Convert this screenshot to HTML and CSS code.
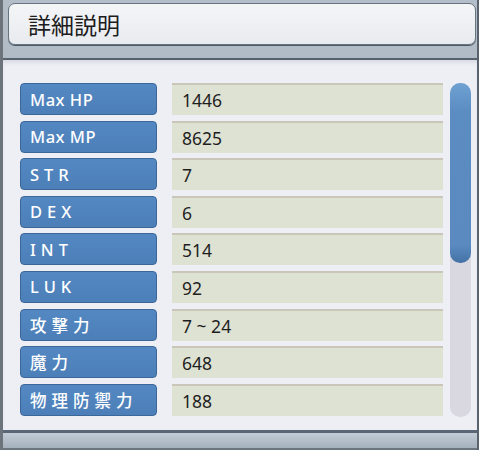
FILE: index.html
```html
<!DOCTYPE html>
<html lang="ja">
<head>
    <meta charset="UTF-8">
    <title>詳細説明</title>
    <link rel="stylesheet" href="styles.css">
</head>
<body>
    <div class="window">
        <div class="title">詳細説明</div>
        <div class="band"></div>
        <div class="panel">
            <div class="stats">
                <div class="label">Max HP</div><div class="value">1446</div>
                <div class="label">Max MP</div><div class="value">8625</div>
                <div class="label wide">STR</div><div class="value">7</div>
                <div class="label wide">DEX</div><div class="value">6</div>
                <div class="label wide">INT</div><div class="value">514</div>
                <div class="label wide">LUK</div><div class="value">92</div>
                <div class="label wide">攻撃力</div><div class="value">7 ~ 24</div>
                <div class="label wide">魔力</div><div class="value">648</div>
                <div class="label wide">物理防禦力</div><div class="value">188</div>
            </div>
            <div class="scroll">
                <div class="thumb"></div>
            </div>
        </div>
        <div class="footer"></div>
    </div>
</body>
</html>
```

FILE: styles.css
```css
body {
    margin: 0;
    background: #fff;
    font-family: "Noto Sans", "Noto Sans CJK JP", sans-serif;
}
.window {
    width: 474px;
    height: 450px;
    display: flex;
    flex-direction: column;
    background: linear-gradient(#b4bec8, #9ca8b4);
    border-left: 3px solid #6c737a;
    border-right: 2px solid #59636e;
}
.title {
    height: 40px;
    margin: 3px 1px 0 5px;
    padding-left: 19px;
    display: flex;
    align-items: center;
    font-size: 23px;
    color: #1c1c1c;
    background: linear-gradient(#f4f5f7, #e8ebef);
    border: 1px solid #66747f;
    border-radius: 7px;
    box-shadow: 0 1px 0 #4f5c68;
}
.band {
    height: 13px;
    border-bottom: 2px solid #56626e;
}
.panel {
    height: 347px;
    padding: 23px 0 0 17px;
    display: flex;
    background: #eeeef5;
    box-shadow: inset 0 4px 4px -2px #d4d6de;
}
.stats {
    display: grid;
    grid-template-columns: 137px 271px;
    grid-auto-rows: 32px;
    column-gap: 15px;
    row-gap: 5.6px;
}
.label {
    display: flex;
    align-items: center;
    padding-left: 9px;
    color: #fff;
    font-size: 16.5px;
    font-weight: 500;
    letter-spacing: 0.5px;
    background: linear-gradient(#5488c2, #4c7fb8);
    border: 1px solid #3b6899;
    border-radius: 4px;
}
.label.wide {
    letter-spacing: 5px;
}
.value {
    display: flex;
    align-items: center;
    padding-left: 10px;
    font-size: 17.5px;
    color: #1e1e1e;
    background: #dee2d3;
    border-top: 2px solid #cac6ba;
}
.scroll {
    width: 21px;
    height: 334px;
    margin-left: 7px;
    background: #d9d8e1;
    border-radius: 10px;
}
.thumb {
    height: 180px;
    border-radius: 10px;
    background: linear-gradient(#6fa1d2 0, #5b8cc2 16%, #5a8abf 90%, #4472a6 100%);
}
.footer {
    flex: 1;
    border-top: 3px solid #5a6676;
    background: linear-gradient(#c3ccd6, #a4b0bd);
    border-bottom: 2px solid #6a7580;
}
```
